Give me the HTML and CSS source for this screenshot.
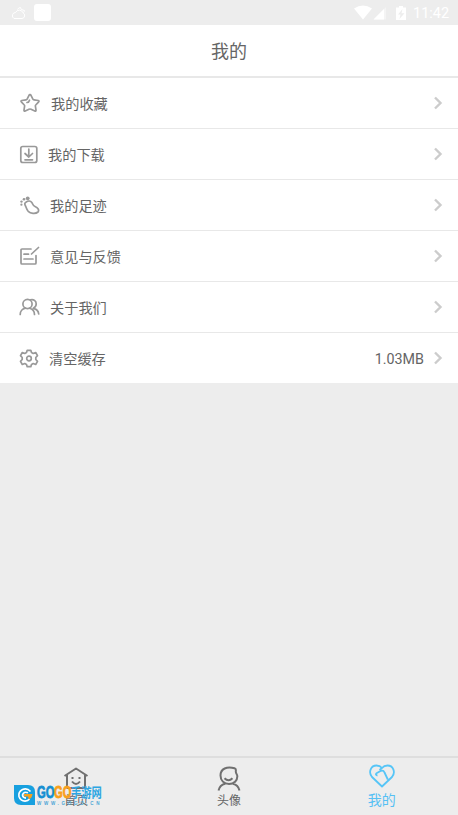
FILE: index.html
```html
<!DOCTYPE html>
<html lang="zh-CN">
<head>
<meta charset="utf-8">
<title>我的</title>
<link rel="stylesheet" href="styles.css">
</head>
<body>
<div class="app">
  <div class="status">
    <svg class="cloud" width="18" height="16" viewBox="0 0 18 16"><path d="M4 13.500H12a3 3 0 0 0 1-5.700A4 4 0 0 0 5.600 7.500 3.200 3.200 0 0 0 4 13.500ZM7.500 4.500a3.500 3.500 0 0 1 3-2Q10 5 14.500 5.500 14.300 7 13.500 7.500"/></svg>
    <span class="square"></span>
    <svg class="signals" width="54" height="16" viewBox="0 0 54 16"><path d="M0 3.500Q9-2.500 18 3.500L9 14.500Z"/><path d="M19.500 14.500 32 2V14.500Z" opacity=".4"/><path d="M19.500 14.500 30 4V14.500Z"/><path d="M42 2.500h3V1h4v1.500h3V15H42Z"/><path class="bolt" d="M48.500 4 44 9.500H46.500L45.500 14 50.500 8.300H47.500Z"/></svg>
    <span class="clock">11:42</span>
  </div>
  <header class="header">我的</header>
  <main class="list">
    <div class="row"><svg class="icon star" width="22" height="20" viewBox="0 0 22 20"><path d="M11 1.800 Q11.500 1.500 12 2.400L13.900 6.100 Q14.200 6.700 15 6.800L19.300 7.500Q20.500 7.900 19.700 8.800L16.700 12Q16.200 12.500 16.400 13.200L17 17.200Q17 18.500 15.800 18L12 16.200Q11 15.800 10 16.200L6.200 18Q5 18.500 5 17.200L5.600 13.200Q5.800 12.500 5.300 12L2.300 8.800Q1.500 7.900 2.700 7.500L7 6.800Q7.800 6.700 8.100 6.100L10 2.400Q10.500 1.500 11 1.800ZM8 9.500Q10 9.200 10.500 7.200"/></svg><span class="label">我的收藏</span><svg class="arrow" width="10" height="14" viewBox="0 0 10 14"><path d="M2 1.500 7.500 7 2 12.500"/></svg></div>
    <div class="row"><svg class="icon download" width="19" height="19" viewBox="0 0 19 19"><rect x="1.800" y="1.500" width="16" height="16" rx="2"/><path d="M9.800 4V12M6 8.500 9.800 12 13.500 8.500M6 14.800H13.500"/></svg><span class="label">我的下载</span><svg class="arrow" width="10" height="14" viewBox="0 0 10 14"><path d="M2 1.500 7.500 7 2 12.500"/></svg></div>
    <div class="row"><svg class="icon foot" width="21" height="19" viewBox="0 0 21 19"><path d="M7.200 6C9 4.800 11.500 4.800 12.800 6.500 14 8 13.500 9.500 16 10.500 19 11.800 20.500 14 19 16 16.500 18.200 11.500 17.500 9.200 15.300 7.200 13 7.500 11.500 6.400 9.700 5.400 8 5.700 6.800 7.200 6Z"/><g class="toes"><circle cx="8.700" cy="2.300" r="1.900"/><circle cx="5" cy="3.200" r="1.300"/><circle cx="2.500" cy="5.600" r="1.200"/><circle cx="2.400" cy="8.700" r="1.100"/></g></svg><span class="label">我的足迹</span><svg class="arrow" width="10" height="14" viewBox="0 0 10 14"><path d="M2 1.500 7.500 7 2 12.500"/></svg></div>
    <div class="row"><svg class="icon edit" width="21" height="20" viewBox="0 0 21 20"><path d="M12 3H3Q2 3 2 4V17Q2 18 3 18H16Q17 18 17 17V9.500M5 8.200H9.500M5 13H14M12.500 8 19.500 1.500"/></svg><span class="label">意见与反馈</span><svg class="arrow" width="10" height="14" viewBox="0 0 10 14"><path d="M2 1.500 7.500 7 2 12.500"/></svg></div>
    <div class="row"><svg class="icon people" width="21" height="18" viewBox="0 0 21 18"><circle cx="8.500" cy="6" r="4.600"/><path d="M1.200 16.500C1.200 13.500 3.500 10.700 6.500 10.200M10.500 10.200C13.500 11 15.500 13.500 15.500 16.500M11.500 1.800C14.500 .8 17.300 3 17.200 6 17.100 8.200 16 9.500 14.300 10.300 17.500 11 19.500 13 19.700 16"/></svg><span class="label">关于我们</span><svg class="arrow" width="10" height="14" viewBox="0 0 10 14"><path d="M2 1.500 7.500 7 2 12.500"/></svg></div>
    <div class="row"><svg class="icon gear" width="20" height="19" viewBox="0 0 20 19"><path d="M8.200 1.300H11.800L12.500 3.600 14.200 4.500 16.700 3.500 18.500 6.700 16.800 8.500V10.500L18.500 12.300 16.700 15.500 14.200 14.500 12.500 15.400 11.800 17.700H8.200L7.500 15.400 5.800 14.500 3.300 15.500 1.500 12.300 3.200 10.500V8.500L1.500 6.700 3.300 3.500 5.800 4.500 7.500 3.600Z"/><circle cx="10" cy="9.500" r="2.300"/></svg><span class="label">清空缓存</span><span class="size">1.03MB</span><svg class="arrow" width="10" height="14" viewBox="0 0 10 14"><path d="M2 1.500 7.500 7 2 12.500"/></svg></div>
  </main>
  <nav class="tabs">
    <div class="tab home"><svg width="26" height="24" viewBox="0 0 26 24"><path d="M1.500 9 13 1.500 24.500 9M4 8V21H22V8M9 14.500Q13 19.500 17 14.500M9.500 10V12M16.500 10V12"/></svg><span>首页</span></div>
    <div class="tab"><svg width="24" height="26" viewBox="0 0 24 26"><path d="M17.500 2.200C10 .2 3.500 2.500 3.500 9.500 3.500 14.500 7 18 12 18S20.500 14.500 20.300 10C20.200 8.500 18.800 7.500 18.800 5.500 18.800 4 19.500 2.800 17.500 2.200ZM7.500 12.200Q11.500 16.500 15.500 12.200M1.500 24.500C2.500 20.500 5 18.500 8 17.800M16 17.800C19 18.500 21.500 20.500 22.500 24.500"/></svg><span>头像</span></div>
    <div class="tab active"><svg width="26" height="24" viewBox="0 0 26 24"><path d="M13 22.500 3 13C-1 8 2 1.500 7.500 1.500Q11 1.500 13 4 15 1.500 18.500 1.500C24 1.500 27 8 23 13ZM13 4 10.500 6M8.500 11.500Q6 11 7.500 9.300L12 6.800Q14.500 6 15.500 8.500L18.800 15.500"/></svg><span>我的</span></div>
    <div class="watermark">
      <svg width="21" height="20" viewBox="0 0 21 20"><path class="mark" d="M0 0H14Q21 0 21 7V20H7Q0 20 0 13Z"/><path class="ring" d="M16.500 6.500Q13 2.500 8.500 4.500 4 7 5 11.500 6.500 16 11 16.200 14 16 15.500 14M14 7.800Q9.500 6 8.500 10 8.800 13 12 13.200"/><path class="beak" d="M10 9H18.500Q18 13 15 14.500L14 11.500H10Z"/></svg>
      <div class="brand"><div class="name"><b>GO</b><b class="orange">GO</b><span>手游网</span></div><div class="url">WWW.GOGO.CN</div></div>
    </div>
  </nav>
</div>
</body>
</html>
```
FILE: styles.css
```css
* { box-sizing: border-box; }
body { margin: 0; background: #ededed; color: #656565; font-family: Roboto, "Noto Sans CJK SC", sans-serif; }
svg { fill: none; flex: none; display: block; }
.app { height: 815px; display: flex; flex-direction: column; }
.status { height: 25px; display: flex; align-items: center; padding: 0 8px 0 10px; color: #fff; }
.cloud { stroke: #fff; stroke-width: 1; }
.square { width: 17px; height: 17px; margin-left: 6px; border-radius: 3px; background: #fff; }
.signals { fill: #fff; margin-left: auto; }
.bolt { fill: #ededed; }
.clock { width: 37px; margin-left: 5px; padding-top: 2px; font-size: 14.5px; line-height: 25px; white-space: nowrap; }
.header { height: 53px; padding-top: 2px; border-bottom: 2px solid #e8e8e8; background: #fff; text-align: center; font-size: 18px; line-height: 50px; }
.list { background: #fff; }
.row { height: 51px; display: flex; align-items: center; padding: 0 15px 0 19px; border-bottom: 1px solid #e8e8e8; font-size: 14.2px; }
.row:last-child { border-bottom: 0; height: 50px; }
.icon { stroke: #999; stroke-width: 1.7; stroke-linecap: round; stroke-linejoin: round; }
.label { margin-left: 10px; padding-top: 1px; line-height: 22px; }
.toes { fill: #999; stroke: none; }
.arrow { stroke: #ccc; stroke-width: 2.4; margin-left: auto; }
.size { margin-left: auto; padding-top: 2px; font-size: 14.3px; }
.size + .arrow { margin-left: 9px; }
.tabs { position: relative; display: flex; height: 59px; margin-top: auto; border-top: 2px solid #dedede; }
.tab { flex: 1; display: flex; flex-direction: column; align-items: center; padding-top: 8px; font-size: 12px; line-height: 18px; }
.tab svg { stroke: #707070; stroke-width: 2; stroke-linejoin: round; }
.tab.home svg { margin-top: 1px; }
.tab.home span { margin-top: 1px; }
.tab.active { color: #56c0f4; font-size: 14px; padding-top: 6px; }
.tab.active svg { stroke: #56c5f7; stroke-width: 1.8; margin-bottom: 3px; }
.watermark { position: absolute; left: 14px; top: 27px; display: flex; gap: 2px; }
.mark { fill: #18a0df; }
.ring { stroke: #fff; stroke-width: 1.7; }
.beak { fill: #f9a01b; }
.name { display: flex; align-items: center; height: 16px; color: #168fd2; font-weight: 700; white-space: nowrap; }
.name b { width: 17px; font-family: "Liberation Sans", sans-serif; font-size: 17px; line-height: 16px; transform: scaleX(.66); transform-origin: left; -webkit-text-stroke: .8px currentColor; }
.name .orange { color: #f9a01b; }
.name span { width: 31px; color: #2da6e2; font-size: 13px; line-height: 16px; transform: scaleX(.79); transform-origin: left; }
.url { color: #4ba6d6; font: 700 4.500px/5px "Liberation Sans", sans-serif; letter-spacing: 2.700px; white-space: nowrap; }
```
